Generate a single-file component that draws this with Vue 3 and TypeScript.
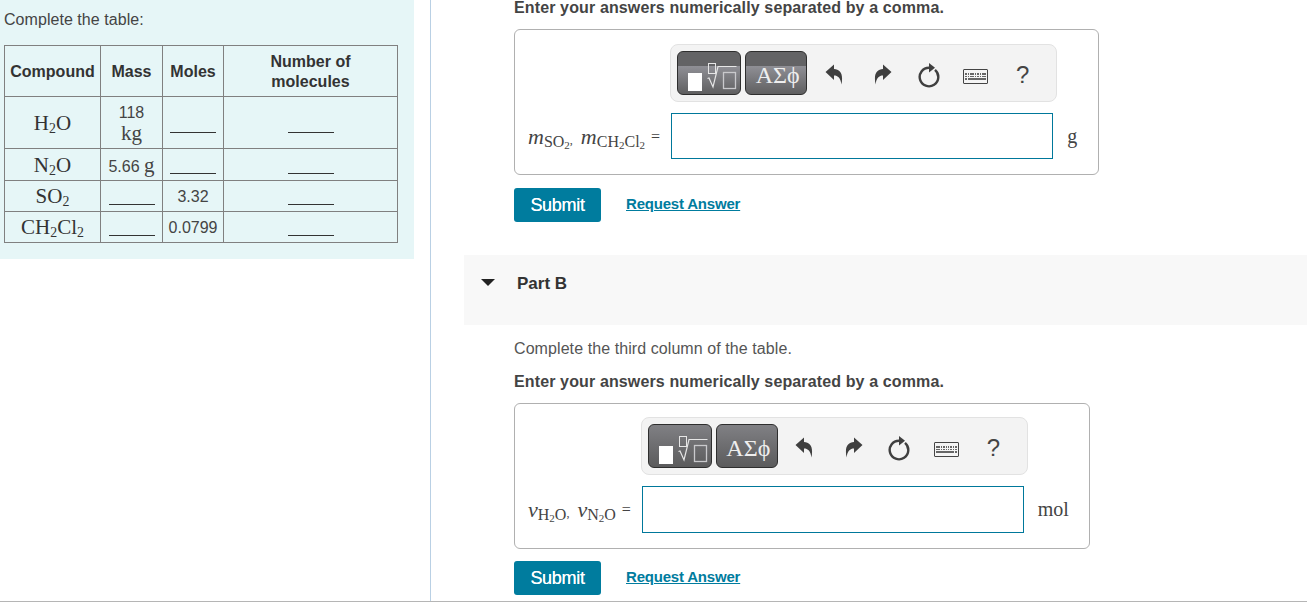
<script setup lang="ts">
interface Cell {
  text?: string
  unit?: string
  blank?: boolean
}

interface Row {
  base: [string, string][]
  mass: Cell
  moles: Cell
}

interface AnswerPart {
  id: string
  title?: string
  prompt?: string
  vars: { symbol: string; sub: [string, string][] }[]
  unit: string
  flatKeys: boolean
}

const rows: Row[] = [
  { base: [['H', '2'], ['O', '']], mass: { text: '118', unit: 'kg' }, moles: { blank: true } },
  { base: [['N', '2'], ['O', '']], mass: { text: '5.66', unit: 'g' }, moles: { blank: true } },
  { base: [['SO', '2']], mass: { blank: true }, moles: { text: '3.32' } },
  { base: [['CH', '2'], ['Cl', '2']], mass: { blank: true }, moles: { text: '0.0799' } }
]

const parts: AnswerPart[] = [
  {
    id: 'a',
    vars: [
      { symbol: 'm', sub: [['SO', '2']] },
      { symbol: 'm', sub: [['CH', '2'], ['Cl', '2']] }
    ],
    unit: 'g',
    flatKeys: false
  },
  {
    id: 'b',
    title: 'Part B',
    prompt: 'Complete the third column of the table.',
    vars: [
      { symbol: 'ν', sub: [['H', '2'], ['O', '']] },
      { symbol: 'ν', sub: [['N', '2'], ['O', '']] }
    ],
    unit: 'mol',
    flatKeys: true
  }
]

const keyDots = [0, 1, 2, 3, 4, 5, 6, 7, 8]
</script>

<template>
  <div class="page">
    <aside class="side">
      <div class="note">
        <p class="note-title">Complete the table:</p>
        <table class="chem-table">
          <thead>
            <tr>
              <th class="col-compound">Compound</th>
              <th class="col-mass">Mass</th>
              <th class="col-moles">Moles</th>
              <th class="col-count">Number of<br />molecules</th>
            </tr>
          </thead>
          <tbody>
            <tr v-for="(row, i) in rows" :key="i" :class="'row-' + i">
              <td class="formula">
                <template v-for="(p, j) in row.base" :key="j">{{ p[0] }}<sub v-if="p[1]">{{ p[1] }}</sub></template>
              </td>
              <td>
                <span v-if="row.mass.blank" class="blank"></span>
                <template v-else-if="i === 0">{{ row.mass.text }}<br /><span class="unit">{{ row.mass.unit }}</span></template>
                <template v-else>{{ row.mass.text }} <span class="unit">{{ row.mass.unit }}</span></template>
              </td>
              <td>
                <span v-if="row.moles.blank" class="blank"></span>
                <template v-else>{{ row.moles.text }}</template>
              </td>
              <td><span class="blank"></span></td>
            </tr>
          </tbody>
        </table>
      </div>
    </aside>

    <main class="main">
      <template v-for="part in parts" :key="part.id">
        <div v-if="part.title" class="part-head">
          <span class="caret"></span>
          <span class="part-name">{{ part.title }}</span>
        </div>

        <div class="part-body" :class="'part-' + part.id">
          <p v-if="part.prompt" class="prompt">{{ part.prompt }}</p>
          <p class="instruction">Enter your answers numerically separated by a comma.</p>
          <div class="answer-box">
            <div class="toolbar">
              <button class="tool-btn tmpl" :class="{ flat: part.flatKeys }">
                <span class="tmpl-solid"></span>
                <svg class="tmpl-svg" width="30" height="27" viewBox="0 0 30 27">
                  <rect x="1.500" y="0.500" width="7" height="10" fill="none" stroke="#e6e6e6" />
                  <path d="M0.500 15.500 2 15 6 24 11 3.500H29.500" fill="none" stroke="#e6e6e6" stroke-width="1.200" />
                  <rect x="16.500" y="9.500" width="12" height="16" fill="none" stroke="#c9c9cc" stroke-width="1.300" />
                </svg>
              </button>
              <button class="tool-btn greek" :class="{ flat: part.flatKeys }">ΑΣϕ</button>
              <div class="tool-icons">
                <span class="slot undo">
                  <svg width="18" height="22" viewBox="0 0 18 22"><path d="M0.500 8 9 0.500V5C15 5.500 18.500 9 16.500 20.500 15.500 14 13 11.500 9 11.500V16Z" fill="#3f3f3f" /></svg>
                </span>
                <span class="slot redo">
                  <svg width="18" height="22" viewBox="0 0 18 22"><path d="M17.500 8 9 0.500V5C3 5.500-0.500 9 1.500 20.500 2.500 14 5 11.500 9 11.500V16Z" fill="#3f3f3f" /></svg>
                </span>
                <span class="slot">
                  <svg width="24" height="26" viewBox="0 0 24 26">
                    <path d="M12 5.700A9.300 9.300 0 1 0 18 7.900" fill="none" stroke="#3f3f3f" stroke-width="2.400" />
                    <path d="M12 1 18 5.700 12 10.500Z" fill="#3f3f3f" />
                  </svg>
                </span>
                <span class="slot">
                  <span class="keyboard">
                    <span v-for="d in keyDots" :key="'a' + d" class="key"></span>
                    <span v-for="d in keyDots" :key="'b' + d" class="key"></span>
                    <span class="key"></span><span class="key space"></span><span class="key"></span>
                  </span>
                </span>
                <span class="slot help">?</span>
              </div>
            </div>
            <div class="math-label">
              <template v-for="(v, i) in part.vars" :key="i">
                <i>{{ v.symbol }}</i><span class="math-sub"><template v-for="(p, j) in v.sub" :key="j">{{ p[0] }}<sub v-if="p[1]">{{ p[1] }}</sub></template></span><span v-if="i === 0" class="comma">,</span>
              </template>
              <span class="equals">=</span>
            </div>
            <div class="math-input"></div>
            <div class="math-unit">{{ part.unit }}</div>
          </div>
          <div class="actions">
            <button class="submit">Submit</button>
            <a class="request" href="#">Request Answer</a>
          </div>
        </div>
      </template>
    </main>
  </div>
</template>

<style>
html,
body {
  background: #fff;
  overflow: hidden;
}
</style>

<style scoped>
.page {
  display: flex;
  box-sizing: border-box;
  height: 602px;
  overflow: hidden;
  border-bottom: 1px solid #b5b5b5;
  font-family: "Liberation Sans", Arial, sans-serif;
  color: #333;
}

.side {
  width: 430px;
  flex: none;
  border-right: 1px solid #b9d0e4;
}

.note {
  box-sizing: border-box;
  width: 414px;
  height: 259px;
  padding: 11px 0 0 4px;
  background: #e6f6f7;
}

.note-title {
  margin: 0;
  font-size: 16px;
  line-height: 18px;
  letter-spacing: 0.05px;
  color: #444;
}

.chem-table {
  margin-top: 16px;
  border-collapse: collapse;
  table-layout: fixed;
  width: 394px;
  font-size: 16px;
  color: #444;
  text-align: center;
}

.chem-table th,
.chem-table td {
  border: 1px solid #808080;
  padding: 2px 0 0;
  line-height: 20px;
}

.chem-table th {
  height: 48px;
  font-weight: 700;
  color: #333;
}

.col-compound {
  width: 95px;
}

.col-mass {
  width: 61px;
}

.col-moles {
  width: 60px;
}

.row-0 td {
  height: 49px;
}

.row-1 td {
  height: 29px;
}

.row-2 td,
.row-3 td {
  height: 28px;
}

.chem-table .formula {
  padding-top: 0;
  font-family: "Liberation Serif", serif;
  font-size: 21px;
  color: #333;
}

.formula sub {
  font-size: 0.66em;
  line-height: 0;
  vertical-align: -3px;
}

.unit {
  font-family: "Liberation Serif", serif;
  font-size: 21px;
}

.blank {
  display: inline-block;
  vertical-align: -3px;
  width: 46px;
  border-bottom: 1px solid #333;
}

.row-0 .blank {
  vertical-align: -4px;
}

.main {
  flex: 1;
  min-width: 0;
}

.part-body {
  padding-left: 83px;
}

.part-a {
  box-sizing: border-box;
  height: 255px;
  padding-top: 1px;
}

.instruction {
  margin: 0;
  font-size: 16px;
  line-height: 14px;
  letter-spacing: 0.13px;
  font-weight: 700;
  color: #444;
}

.part-a .instruction {
  margin-bottom: 14px;
}

.prompt {
  margin: 15px 0 15px;
  font-size: 16px;
  line-height: 18px;
  letter-spacing: 0.08px;
  color: #555;
}

.part-b .instruction {
  line-height: 18px;
  margin-bottom: 12px;
}

.answer-box {
  display: grid;
  grid-template-columns: auto 382px auto;
  grid-template-rows: 58px 46px;
  row-gap: 11px;
  column-gap: 11px;
  width: fit-content;
  padding: 14px 21px 15px 13px;
  border: 1px solid #b0b0b0;
  border-radius: 6px;
}

.part-b .answer-box {
  grid-template-rows: 58px 47px;
  padding-top: 13px;
  padding-right: 20px;
}

.toolbar {
  grid-column: 2 / 4;
  grid-row: 1;
  display: flex;
  align-items: center;
  box-sizing: border-box;
  width: 387px;
  height: 58px;
  margin-left: -1px;
  padding-left: 6px;
  background: #f3f3f3;
  border: 1px solid #e2e2e2;
  border-radius: 8px;
}

.tool-btn {
  box-sizing: border-box;
  height: 44px;
  padding: 0;
  border: 1px solid #2e2e2e;
  border-radius: 6px;
  color: #eee;
  background: linear-gradient(#636365 0, #636365 33%, #8f8f95 34%, #5f5f60 100%);
}

.tool-btn.flat {
  background: linear-gradient(#808084 0, #5b5b5c 100%);
}

.tmpl {
  position: relative;
  width: 64px;
}

.tmpl-solid {
  position: absolute;
  left: 10px;
  bottom: 3px;
  width: 14px;
  height: 18px;
  background: #fff;
}

.tmpl-svg {
  position: absolute;
  left: 29px;
  top: 11px;
}

.greek {
  width: 62px;
  margin-left: 4px;
  padding-top: 3px;
  padding-left: 3px;
  font-family: "Liberation Serif", "DejaVu Serif", serif;
  font-size: 24px;
  line-height: 1;
}

.tool-icons {
  display: flex;
  align-items: center;
  margin-top: 3px;
  margin-left: 4px;
}

.slot {
  display: flex;
  align-items: center;
  justify-content: center;
  width: 47px;
  height: 30px;
}

.undo {
  box-sizing: border-box;
  padding-right: 2px;
}

.redo {
  box-sizing: border-box;
  padding-left: 3px;
}

.help {
  font-size: 24px;
  color: #444;
}

.keyboard {
  box-sizing: border-box;
  display: grid;
  grid-template-columns: repeat(9, 1.5px);
  grid-auto-rows: 1.6px;
  gap: 1.2px 0.9px;
  justify-content: center;
  align-content: center;
  width: 25px;
  height: 15px;
  margin-top: 4px;
  border: 1.5px solid #444;
  border-radius: 1px;
  background: #f4f4f4;
}

.key {
  background: #666;
}

.key.space {
  grid-column: span 7;
}

.math-label {
  grid-column: 1;
  grid-row: 2;
  align-self: center;
  padding-top: 2px;
  font-family: "Liberation Serif", serif;
  font-size: 22px;
  color: #444;
  white-space: nowrap;
}

.math-sub {
  font-size: 16px;
  vertical-align: -3px;
}

.math-sub sub {
  font-size: 11px;
  line-height: 0;
  vertical-align: -2px;
}

.comma {
  margin-right: 8px;
  font-size: 12px;
}

.equals {
  margin-left: 6px;
  font-size: 16px;
  vertical-align: 2px;
}

.math-input {
  grid-column: 2;
  grid-row: 2;
  border: 1px solid #00789b;
  background: #fff;
}

.math-unit {
  grid-column: 3;
  grid-row: 2;
  align-self: center;
  margin-left: 3px;
  font-family: "Liberation Serif", serif;
  font-size: 20px;
  color: #444;
}

.actions {
  display: flex;
  align-items: center;
  margin-top: 12px;
}

.part-a .actions {
  margin-top: 13px;
}

.submit {
  width: 87px;
  height: 34px;
  padding: 0;
  border: none;
  border-radius: 3px;
  background: #007c9e;
  color: #fff;
  font-family: inherit;
  font-size: 18px;
  letter-spacing: -0.3px;
  text-shadow: 0 0 0.5px #fff;
}

.request {
  margin: 0 0 3px 25px;
  font-size: 15px;
  font-weight: 700;
  letter-spacing: -0.2px;
  color: #007c9e;
}

.part-head {
  display: flex;
  align-items: flex-start;
  box-sizing: border-box;
  height: 70px;
  margin-left: 33px;
  padding: 19px 0 0 17px;
  background: #f8f8f8;
}

.caret {
  width: 0;
  height: 0;
  margin-top: 5px;
  border-left: 7px solid transparent;
  border-right: 7px solid transparent;
  border-top: 7px solid #222;
}

.part-name {
  margin-left: 22px;
  font-size: 17px;
  line-height: 20px;
  font-weight: 700;
  color: #333;
}
</style>
